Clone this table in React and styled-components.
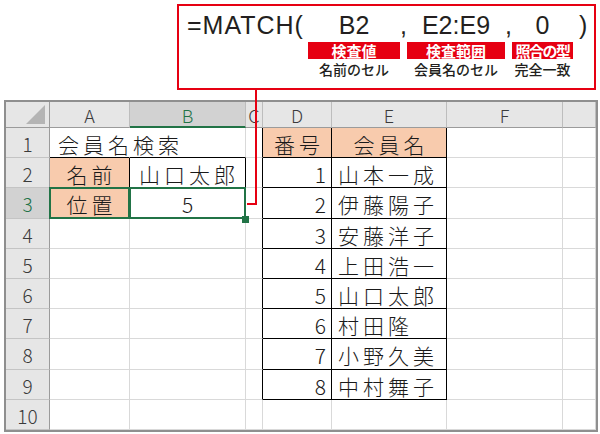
import React from "react";
import styled, { createGlobalStyle, css } from "styled-components";

const RED = "#e60012";
const GREEN = "#217346";
const PEACH = "#f8cbad";
const GRID = "#d9d9d9";
const INK = "#1a1a1a";

const GlobalStyle = createGlobalStyle`
  html, body {
    margin: 0;
    padding: 0;
    background: #fff;
  }
  body {
    font-family: "Noto Sans CJK JP", "Noto Sans", sans-serif;
  }
`;

const Page = styled.div`
  position: relative;
  width: 600px;
  height: 434px;
  overflow: hidden;
  padding-top: 4px;
  box-sizing: border-box;
`;

// formula callout at the top
const FormulaBox = styled.div`
  margin-left: 177px;
  width: 419px;
  height: 86px;
  box-sizing: border-box;
  border: 2px solid ${RED};
  padding: 4px 0 0 8px;
  display: grid;
  grid-template-columns: 121px 92px 7px 98px 7px 61px 1fr;
  grid-template-rows: 30px 17px 16px;
  row-gap: 2px;
`;

const Token = styled.span`
  grid-row: 1;
  font-family: "Liberation Sans", Arial, sans-serif;
  font-size: 25px;
  line-height: 30px;
  letter-spacing: ${(p) => (p.$wide ? "1px" : "0")};
  color: #231f20;
  text-align: ${(p) => p.$align || "center"};
  padding-left: ${(p) => p.$pad || 0}px;
  white-space: nowrap;
`;

const Tag = styled.div`
  grid-row: 2;
  background: ${RED};
  color: #fff;
  font-weight: bold;
  font-size: 15px;
  line-height: 17px;
  text-align: center;
  letter-spacing: ${(p) => (p.$tight ? "-1.5px" : "0")};
  white-space: nowrap;
`;

const Note = styled.div`
  grid-row: 3;
  color: #231f20;
  font-size: 14px;
  font-weight: 500;
  line-height: 16px;
  text-align: center;
  white-space: nowrap;
`;

// red leader line from the callout to B3
const Leader = styled.div`
  position: absolute;
  left: 247px;
  top: 90px;
  width: 8px;
  height: 113px;
  border-right: 2px solid ${RED};
  border-bottom: 2px solid ${RED};
  z-index: 10;
`;

// spreadsheet
const Sheet = styled.div`
  margin: 10px 0 0 4px;
  width: 594px;
  box-sizing: border-box;
  border: 2px solid #8f8f8f;
  display: grid;
  grid-template-columns: 44px 80px 116px 17px 69px 115px 116px 33px;
  grid-template-rows: 26px repeat(10, 30.2px);
  color: ${INK};
`;

const Corner = styled.div`
  background: #e6e6e6;
  border-right: 1px solid #9b9b9b;
  border-bottom: 1px solid #9b9b9b;
  box-sizing: border-box;
  display: flex;
  align-items: flex-end;
  justify-content: flex-end;
  padding: 0 4px 3px 0;
`;

const Triangle = styled.div`
  width: 0;
  height: 0;
  border-left: 19px solid transparent;
  border-bottom: 19px solid #b4b4b4;
`;

const ColHead = styled.div`
  box-sizing: border-box;
  background: ${(p) => (p.$active ? "#d2d2d2" : "#e6e6e6")};
  color: ${(p) => (p.$active ? GREEN : "#3a3a3a")};
  border-right: 1px solid #bdbdbd;
  border-bottom: ${(p) => (p.$active ? `2px solid ${GREEN}` : "1px solid #9b9b9b")};
  font-size: 18px;
  font-weight: 300;
  display: flex;
  align-items: center;
  justify-content: center;
  overflow: hidden;
  padding-top: 1px;
`;

const RowHead = styled.div`
  box-sizing: border-box;
  background: ${(p) => (p.$active ? "#d2d2d2" : "#e6e6e6")};
  color: ${(p) => (p.$active ? GREEN : "#3a3a3a")};
  border-right: 1px solid ${(p) => (p.$active ? GREEN : "#9b9b9b")};
  border-bottom: 1px solid #c4c4c4;
  font-size: 19px;
  font-weight: 300;
  display: flex;
  align-items: center;
  justify-content: center;
  padding-top: 2px;
`;

const justify = { left: "flex-start", center: "center", right: "flex-end" };

const Cell = styled.div`
  position: relative;
  box-sizing: border-box;
  display: flex;
  align-items: center;
  justify-content: ${(p) => justify[p.$align || "left"]};
  padding: 3px ${(p) => (p.$align === "right" ? 5 : 0)}px 0 ${(p) => p.$indent ?? 6}px;
  background: ${(p) => p.$fill || "#fff"};
  border-right: 1px solid ${(p) => p.$r || GRID};
  border-bottom: 1px solid ${(p) => p.$b || GRID};
  font-size: 21px;
  font-weight: 300;
  white-space: nowrap;
  ${(p) => p.$over && css`z-index: 1;`}
  ${(p) =>
    p.$sel &&
    css`
      z-index: 2;
      &::after {
        content: "";
        position: absolute;
        top: -1px;
        left: -1px;
        right: -1px;
        bottom: -1px;
        border: 2px solid ${GREEN};
        pointer-events: none;
      }
    `}
`;

const Text = styled.span`
  letter-spacing: ${(p) => (p.$num ? "0" : "4px")};
  margin-right: ${(p) => (p.$num ? "0" : "-4px")};
`;

const Handle = styled.span`
  position: absolute;
  right: -4px;
  bottom: -5px;
  width: 7px;
  height: 7px;
  background: ${GREEN};
  z-index: 3;
`;

const COLS = ["A", "B", "C", "D", "E", "F", ""];
const MEMBERS = ["山本一成", "伊藤陽子", "安藤洋子", "上田浩一", "山口太郎", "村田隆", "小野久美", "中村舞子"];

const cellSpec = (r, c) => {
  const s = {};
  if (r === 1 && c === 1) {
    s.text = "会員名検索";
    s.over = true;
    s.r = "#fff";
    s.indent = 8;
  }
  if (r === 1 && (c === 1 || c === 2)) s.b = "#000";
  if ((r === 2 || r === 3) && (c === 1 || c === 2)) {
    s.r = "#000";
    s.b = "#000";
  }
  if (r === 2 && c === 1) Object.assign(s, { text: "名前", fill: PEACH, align: "center", indent: 0 });
  if (r === 3 && c === 1) Object.assign(s, { text: "位置", fill: PEACH, align: "center", indent: 0, sel: true });
  if (r === 2 && c === 2) Object.assign(s, { text: "山口太郎", indent: 9 });
  if (r === 3 && c === 2) Object.assign(s, { text: "5", num: true, align: "center", indent: 0, sel: true, handle: true });

  if (c === 3 && r <= 9) s.r = "#000";
  if ((c === 4 || c === 5) && r <= 9) {
    s.r = "#000";
    s.b = "#000";
  }
  if (r === 1 && c === 4) Object.assign(s, { text: "番号", fill: PEACH, align: "center", indent: 0 });
  if (r === 1 && c === 5) Object.assign(s, { text: "会員名", fill: PEACH, align: "center", indent: 0 });
  if (r >= 2 && r <= 9 && c === 4) Object.assign(s, { text: String(r - 1), num: true, align: "right", indent: 0 });
  if (r >= 2 && r <= 9 && c === 5) Object.assign(s, { text: MEMBERS[r - 2], indent: 6 });
  return s;
};

function App() {
  const rows = [];
  for (let r = 1; r <= 10; r++) {
    rows.push(
      <RowHead key={`h${r}`} $active={r === 3}>
        {r}
      </RowHead>
    );
    for (let c = 1; c <= 7; c++) {
      const s = cellSpec(r, c);
      rows.push(
        <Cell
          key={`${r}-${c}`}
          $fill={s.fill}
          $align={s.align}
          $indent={s.indent}
          $r={s.r}
          $b={s.b}
          $over={s.over}
          $sel={s.sel}
        >
          {s.text && <Text $num={s.num}>{s.text}</Text>}
          {s.handle && <Handle />}
        </Cell>
      );
    }
  }

  return (
    <Page>
      <GlobalStyle />
      <FormulaBox>
        <Token $align="left" $wide>=MATCH(</Token>
        <Token>B2</Token>
        <Token>,</Token>
        <Token>E2:E9</Token>
        <Token>,</Token>
        <Token>0</Token>
        <Token $align="left" $pad={6}>)</Token>

        <Tag style={{ gridColumn: 2 }}>検査値</Tag>
        <Tag style={{ gridColumn: 4 }}>検査範囲</Tag>
        <Tag style={{ gridColumn: 6 }} $tight>照合の型</Tag>

        <Note style={{ gridColumn: 2 }}>名前のセル</Note>
        <Note style={{ gridColumn: 4 }}>会員名のセル</Note>
        <Note style={{ gridColumn: 6 }}>完全一致</Note>
      </FormulaBox>

      <Leader />

      <Sheet>
        <Corner>
          <Triangle />
        </Corner>
        {COLS.map((name, i) => (
          <ColHead key={`c${i}`} $active={name === "B"}>
            {name}
          </ColHead>
        ))}
        {rows}
      </Sheet>
    </Page>
  );
}

export default App;
